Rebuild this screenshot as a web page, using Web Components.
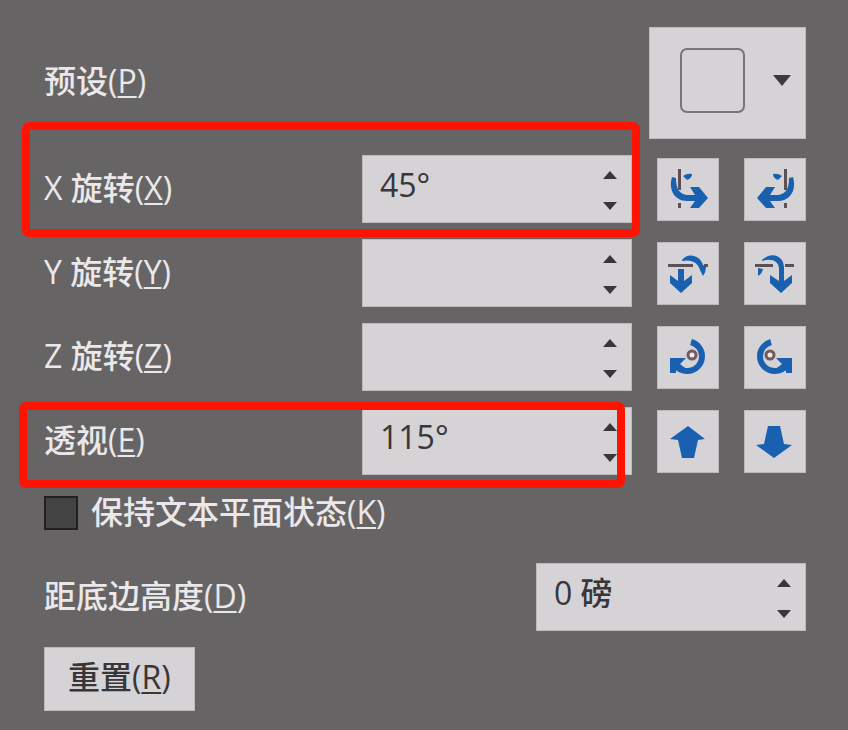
<!DOCTYPE html>
<html lang="zh-CN">
<head>
<meta charset="utf-8">
<meta name="viewport" content="width=device-width, initial-scale=1">
<title>三维旋转</title>
<style>
  :root {
    --color-panel: #666464;
    --color-label: #eae8ea;
    --color-control: #d5d3d6;
    --color-edge: #bcbabd;
    --color-ink: #383638;
    --color-icon: #1a60b0;
    --color-mark: #ff1404;
  }

  body {
    margin: 0;
    min-height: 100vh;
    background: var(--color-panel);
    color: var(--color-label);
    font: 500 32px/40px "Open Sans", "Noto Sans CJK SC", sans-serif;
  }
</style>
</head>
<body>

<rotation-panel>
  <preset-row label="预设" key="P"></preset-row>
  <mark-frame class="rotate">
    <spin-row label="X 旋转" key="X" value="45°">
      <icon-button icon="x-left" label="向左"></icon-button>
      <icon-button icon="x-right" label="向右"></icon-button>
    </spin-row>
  </mark-frame>
  <spin-row label="Y 旋转" key="Y">
    <icon-button icon="y-up" label="向上"></icon-button>
    <icon-button icon="y-down" label="向下"></icon-button>
  </spin-row>
  <spin-row label="Z 旋转" key="Z">
    <icon-button icon="z-cw" label="顺时针"></icon-button>
    <icon-button icon="z-ccw" label="逆时针"></icon-button>
  </spin-row>
  <mark-frame class="perspective">
    <spin-row label="透视" key="E" value="115°">
      <icon-button icon="narrow" label="缩小视野"></icon-button>
      <icon-button icon="widen" label="扩大视野"></icon-button>
    </spin-row>
  </mark-frame>
  <check-row label="保持文本平面状态" key="K"></check-row>
  <spin-row label="距底边高度" key="D" value="0 磅"></spin-row>
  <reset-button label="重置" key="R"></reset-button>
</rotation-panel>

<script>
const ICONS = {
  "x-left": `
    <path class="axis" d="M20 10h3v21h-3zM20 44h3v5h-3z"/>
    <path d="M14 18C10 31 17 42 29 42H37L32 49H41L50 39L41 28H32L37 36H29C22 35 18 31 18 19Z"/>
    <path d="M25 17Q29 14 34 15Q34 19 29 21Z"/>`,
  "y-up": `
    <path class="axis" d="M10 21h25v3H10zM46 21h4v3h-4z"/>
    <path d="M24 17C30 9 42 12 45 22L48 24Q48 29 45 33L42 27C40 20 34 16 24 18Z"/>
    <path d="M20 26H26V38L34 32V40L23 50L12 40V32L20 38Z"/>`,
  "y-down": `
    <path class="axis" d="M10 21h18v3H10zM40 21h9v3h-9z"/>
    <path d="M17 17C25 9 38 11 39 24V38L47 32V40L36 50L25 40V32L34 38V25C33 18 27 15 17 18Z"/>
    <path d="M13 25L18 26Q17 31 13 33Z"/>`,
  "z-cw": `
    <path class="arc" d="M33 15C40 17 44 23 44 29C44 38 37 44 29 44C24 44 20 42 17 38"/>
    <path d="M12 31H28L22 37L27 41L22 45L18 42V46H12Z"/>
    <circle class="hub" cx="34" cy="28" r="4"/>`,
  "narrow": `<path d="M30 15L47 28L40 29L36 47H24L20 29L12 28Z"/>`,
  "widen": `<path d="M23 15H35L39 33L47 34L29 47L11 34L19 33Z"/>`
};

// The opposite directions are mirrored copies
ICONS["x-right"] = `<g transform="matrix(-1 0 0 1 62 0)">${ICONS["x-left"]}</g>`;
ICONS["z-ccw"] = `<g transform="matrix(-1 0 0 1 59 0)">${ICONS["z-cw"]}</g>`;

const SHARED_STYLE = `
  * {
    box-sizing: border-box;
  }

  button, input {
    margin: 0;
    border: 1px solid var(--color-edge);
    border-radius: 0;
    padding: 0;
    background: var(--color-control);
    color: var(--color-ink);
    font: inherit;
  }

  label {
    padding-bottom: 2px;
  }

  u {
    text-decoration-thickness: 2px;
    text-underline-offset: 3px;
  }

  svg {
    display: block;
  }`;

class PanelElement extends HTMLElement {
  constructor() {
    super();
    this.attachShadow({ mode: "open" });
    this.label = this.getAttribute("label");
    this.key = this.getAttribute("key");
  }

  get caption() {
    return `${this.label}(<u>${this.key}</u>)`;
  }

  render(style, markup) {
    this.shadowRoot.innerHTML = `<style>${SHARED_STYLE}${style}</style>${markup}`;
  }
}

class RotationPanel extends PanelElement {
  constructor() {
    super();
    this.render(`
      :host {
        display: flex;
        flex-direction: column;
        gap: 16px;
        padding: 27px 42px 19px 44px;
      }`, `<slot></slot>`);
  }
}

class PresetRow extends PanelElement {
  constructor() {
    super();
    this.render(`
      :host {
        display: flex;
        align-items: center;
        justify-content: space-between;
      }

      label {
        padding-bottom: 4px;
      }

      button {
        display: flex;
        align-items: center;
        justify-content: space-between;
        width: 157px;
        height: 112px;
        padding: 0 14px 6px 30px;
      }

      .swatch {
        width: 65px;
        height: 65px;
        border: 2px solid #777577;
        border-radius: 7px;
      }`, `
      <label for="preset">${this.caption}</label>
      <button id="preset" type="button" aria-haspopup="listbox">
        <span class="swatch"></span>
        <svg width="18" height="11" fill="#3c3a3c"><path d="M0 0H18L9 11Z"/></svg>
      </button>`);
  }
}

class SpinRow extends PanelElement {
  constructor() {
    super();
    const value = this.getAttribute("value") || "";

    this.render(`
      :host {
        display: flex;
        align-items: center;
        gap: 25px;
      }

      label {
        flex: 1;
      }

      .field {
        display: grid;
        grid-template-columns: 1fr 42px;
        width: 270px;
        height: 68px;
        border: 1px solid var(--color-edge);
        background: var(--color-control);
      }

      input {
        min-width: 0;
        border: 0;
        padding: 0 0 8px 17px;
        outline: none;
      }

      .steps {
        display: flex;
        flex-direction: column;
        justify-content: center;
        padding-top: 3px;
      }

      .steps button {
        display: grid;
        place-items: center;
        height: 31px;
        border: 0;
      }`, `
      <label for="value">${this.caption}</label>
      <div class="field">
        <input id="value" type="text" value="${value}">
        <div class="steps">
          <button type="button" aria-label="增加"><svg width="14" height="8" fill="#383638"><path d="M0 8H14L7 0Z"/></svg></button>
          <button type="button" aria-label="减少"><svg width="14" height="8" fill="#383638"><path d="M0 0H14L7 8Z"/></svg></button>
        </div>
      </div>
      <slot></slot>`);

    this.shadowRoot.querySelectorAll(".steps button").forEach((button, i) => {
      button.addEventListener("click", () => this.step(i === 0 ? 1 : -1));
    });
  }

  step(amount) {
    const input = this.shadowRoot.querySelector("input");
    const unit = input.value.replace(/^-?[\d.]+/, "") || "°";
    input.value = (parseFloat(input.value) || 0) + amount + unit;
  }
}

class IconButton extends PanelElement {
  constructor() {
    super();
    this.render(`
      :host {
        display: block;
      }

      button {
        display: block;
        width: 62px;
        height: 63px;
      }

      svg {
        fill: var(--color-icon);
      }

      .axis {
        fill: #5c5055;
      }

      .arc {
        fill: none;
        stroke: var(--color-icon);
        stroke-width: 6;
      }

      .hub {
        fill: #f0ecec;
        stroke: #735a60;
        stroke-width: 3;
      }`, `
      <button type="button" aria-label="${this.label}">
        <svg width="60" height="60" viewBox="0 0 60 60">${ICONS[this.getAttribute("icon")]}</svg>
      </button>`);
  }
}

class CheckRow extends PanelElement {
  constructor() {
    super();
    this.render(`
      :host {
        display: flex;
        align-items: center;
        gap: 13px;
        height: 44px;
        margin-bottom: 12px;
      }

      input {
        appearance: none;
        width: 34px;
        height: 34px;
        border: 2px solid #222122;
        background: #444344;
      }

      input:checked {
        background: var(--color-icon);
      }`, `
      <input id="keep" type="checkbox">
      <label for="keep">${this.caption}</label>`);
  }
}

class ResetButton extends PanelElement {
  constructor() {
    super();
    this.render(`
      :host {
        display: block;
      }

      button {
        height: 64px;
        padding: 0 23px 4px;
      }`, `<button type="button">${this.caption}</button>`);
  }
}

// Red outline drawn over the row that it wraps
class MarkFrame extends PanelElement {
  constructor() {
    super();
    this.render(`
      :host {
        display: block;
        position: relative;
      }

      .outline {
        position: absolute;
        inset: -33px 166px -14px -22px;
        z-index: 1;
        border: 8px solid var(--color-mark);
        border-radius: 7px;
        pointer-events: none;
      }

      :host(.perspective) .outline {
        inset: -5px 181px -13px -25px;
      }`, `<slot></slot><div class="outline"></div>`);
  }
}

customElements.define("rotation-panel", RotationPanel);
customElements.define("preset-row", PresetRow);
customElements.define("spin-row", SpinRow);
customElements.define("icon-button", IconButton);
customElements.define("check-row", CheckRow);
customElements.define("reset-button", ResetButton);
customElements.define("mark-frame", MarkFrame);
</script>
</body>
</html>
